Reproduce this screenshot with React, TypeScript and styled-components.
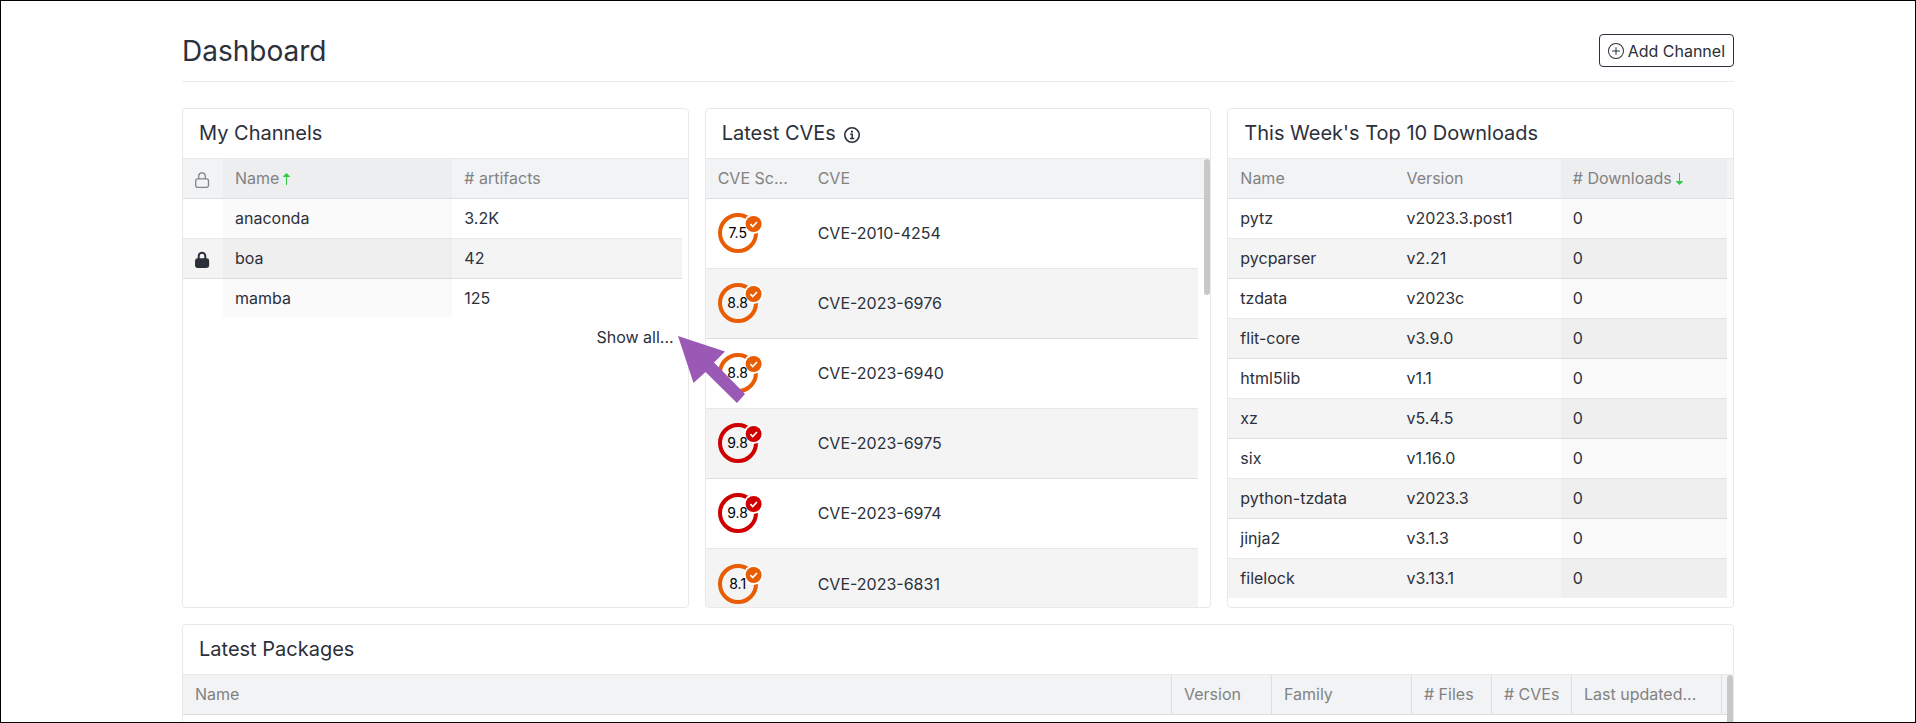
import React from 'react';
import styled, { createGlobalStyle, css } from 'styled-components';
import { BsPlusCircle } from 'react-icons/bs';

const GlobalStyle = createGlobalStyle`
  *, *::before, *::after { box-sizing: border-box; }
  body {
    margin: 0;
    background: #fff;
    color: #2b303b;
    font-family: Inter, "Liberation Sans", sans-serif;
    font-size: 16px;
    line-height: 24px;
  }
`;

const Page = styled.div`
  height: 100vh;
  overflow: hidden;
  border: 1px solid #000;
`;

const Container = styled.main`
  position: relative;
  max-width: 1584px;
  margin: 0 auto;
  padding: 24px 16px;
`;

const PageHeader = styled.header`
  display: flex;
  align-items: center;
  justify-content: space-between;
  height: 57px;
  padding-bottom: 5px;
  border-bottom: 1px solid #e9e9e9;
`;

const PageTitle = styled.h1`
  margin: 0;
  font-size: 28px;
  font-weight: 400;
  line-height: 32px;
`;

const OutlineButton = styled.button`
  display: flex;
  align-items: center;
  gap: 4px;
  height: 33px;
  padding: 0 8px;
  border: 1px solid #2b303b;
  border-radius: 4px;
  background: #fff;
  color: inherit;
  font: inherit;
`;

const CardGrid = styled.div`
  display: grid;
  grid-template-columns: repeat(3, minmax(0, 1fr));
  gap: 16px;
  margin-top: 26px;
`;

const Card = styled.section<{ $wide?: boolean }>`
  display: flex;
  flex-direction: column;
  height: 500px;
  overflow: hidden;
  border: 1px solid #e9e9e9;
  border-radius: 4px;
  ${({ $wide }) => $wide && css`grid-column: 1 / -1;`}
`;

const CardTitle = styled.h2`
  display: flex;
  flex: none;
  align-items: center;
  gap: 8px;
  height: 50px;
  margin: 0;
  padding: 0 16px 1px;
  border-bottom: 1px solid #e9e9e9;
  font-size: 20px;
  font-weight: 400;
`;

const CardBody = styled.div<{ $grow?: boolean }>`
  display: flex;
  flex: ${({ $grow }) => ($grow ? '1' : 'none')};
  align-items: flex-start;
  min-height: 0;
  overflow: hidden;
`;

const Scrollbar = styled.div<{ $length: number }>`
  flex: none;
  width: 6px;
  height: ${({ $length }) => $length}px;
  border-radius: 3px;
  background: #c8c8c8;
`;

const Table = styled.table`
  flex: 1;
  width: 100%;
  min-width: 0;
  table-layout: fixed;
  border-collapse: separate;
  border-spacing: 0;
`;

const Col = styled.col<{ $width?: number }>`
  width: ${({ $width }) => ($width ? `${$width}px` : 'auto')};
`;

const HeadCell = styled.th<{ $sorted?: boolean; $divided?: boolean }>`
  height: 40px;
  padding: 0 0 1px 12px;
  border-bottom: 1px solid #dddee0;
  background: ${({ $sorted }) => ($sorted ? '#edeef0' : '#f2f3f5')};
  color: #828282;
  font-weight: 400;
  text-align: left;
  white-space: nowrap;
  ${({ $divided }) => $divided && css`border-right: 1px solid #dddee0;`}
`;

const Gutter = styled.td`
  padding: 0;
  border-bottom: 1px solid #dddee0;
  background: #f2f3f5;
`;

const Cell = styled.td<{ $sorted?: boolean }>`
  padding: 0 0 1px 12px;
  border-bottom: 1px solid rgba(0, 0, 0, 0.09);
  background: ${({ $sorted }) => ($sorted ? '#fafafa' : '#fff')};
`;

const Row = styled.tr<{ $tall?: boolean }>`
  height: ${({ $tall }) => ($tall ? 70 : 40)}px;
  &:nth-child(even) ${Cell} { background: #f4f4f4; }
  &:nth-child(even) ${Cell}[data-sorted] { background: #efefef; }
  &:last-child { height: ${({ $tall }) => ($tall ? 70 : 39)}px; }
  &:last-child ${Cell} { border-bottom: 0; }
`;

const Svg = styled.svg`
  display: block;
  flex: none;
`;

const SortMark = styled(Svg)`
  display: inline-block;
  margin-left: 4px;
  vertical-align: -1px;
`;

const CardFooter = styled.div`
  display: flex;
  justify-content: flex-end;
  padding: 7px 14px;
`;

const CardLink = styled.a`
  color: inherit;
  text-decoration: none;
`;

const Score = styled.div`
  position: relative;
  width: 44px;
  height: 40px;
`;

const ScoreValue = styled.span`
  position: absolute;
  inset: 0 4px 0 0;
  color: #000;
  font-size: 14px;
  line-height: 40px;
  text-align: center;
`;

const Pointer = styled(Svg)`
  position: absolute;
  top: 335px;
  left: 512px;
`;

function SortArrow({ down }: { down?: boolean }) {
  return (
    <SortMark width="7" height="12" viewBox="0 0 7 12" aria-hidden="true">
      <g transform={down ? 'rotate(180 3.5 6)' : undefined} fill="#2ecc40">
        <path d="M3.500 0 6.800 3.200V4H.2V3.200z" />
        <rect x="3" y="3" width="1" height="9" />
      </g>
    </SortMark>
  );
}

function Lock({ filled }: { filled?: boolean }) {
  const color = filled ? '#2b303b' : '#828282';
  return (
    <Svg width="15" height="20" viewBox="0 -4 15 20" aria-label="Private" role="img">
      <path
        d="M3.700 7V4.200a3.300 3.400 0 0 1 6.600 0V7"
        fill="none"
        stroke={color}
        strokeWidth={filled ? 2 : 1.3}
      />
      <rect x=".7" y="6.900" width="12.800" height="8.400" rx="1.800" fill={filled ? color : 'none'} stroke={color} strokeWidth="1.300" />
    </Svg>
  );
}

function InfoIcon() {
  return (
    <Svg width="16" height="20" viewBox="0 -4 16 20" fill="none" stroke="currentColor" aria-label="About this list" role="img">
      <circle cx="8" cy="8" r="7.200" strokeWidth="1.600" />
      <path d="M6.200 7.200h2v4M6 11.500h4.200" strokeWidth="1.500" />
      <circle cx="7.900" cy="4.700" r="1.100" fill="currentColor" stroke="none" />
    </Svg>
  );
}

function ScoreBadge({ value }: { value: string }) {
  const color = Number(value) >= 9 ? '#d00000' : '#e85d04';
  return (
    <Score>
      <Svg width="46" height="40" viewBox="0 0 46 40" aria-hidden="true">
        <circle cx="20" cy="20" r="18" fill="none" stroke={color} strokeWidth="4" />
        <circle cx="35.600" cy="11" r="10" fill="#fff" />
        <circle cx="35.600" cy="11" r="8" fill={color} />
        <path d="m32.400 11.200 2.300 2.300 4.300-4.500" fill="none" stroke="#fff" strokeWidth="1.700" />
      </Svg>
      <ScoreValue>{value}</ScoreValue>
    </Score>
  );
}

const channels = [
  { name: 'anaconda', artifacts: '3.2K', locked: false },
  { name: 'boa', artifacts: '42', locked: true },
  { name: 'mamba', artifacts: '125', locked: false },
];

const cves = [
  ['7.5', 'CVE-2010-4254'],
  ['8.8', 'CVE-2023-6976'],
  ['8.8', 'CVE-2023-6940'],
  ['9.8', 'CVE-2023-6975'],
  ['9.8', 'CVE-2023-6974'],
  ['8.1', 'CVE-2023-6831'],
];

const downloads = [
  ['pytz', 'v2023.3.post1'],
  ['pycparser', 'v2.21'],
  ['tzdata', 'v2023c'],
  ['flit-core', 'v3.9.0'],
  ['html5lib', 'v1.1'],
  ['xz', 'v5.4.5'],
  ['six', 'v1.16.0'],
  ['python-tzdata', 'v2023.3'],
  ['jinja2', 'v3.1.3'],
  ['filelock', 'v3.13.1'],
];

const packageColumns: { label: string; width?: number }[] = [
  { label: 'Name' },
  { label: 'Version', width: 100 },
  { label: 'Family', width: 140 },
  { label: '# Files', width: 80 },
  { label: '# CVEs', width: 80 },
  { label: 'Last updated...', width: 150 },
];

export default function App() {
  return (
    <Page>
      <GlobalStyle />
      <Container>
        <PageHeader>
          <PageTitle>Dashboard</PageTitle>
          <OutlineButton type="button">
            <BsPlusCircle size={16} />
            Add Channel
          </OutlineButton>
        </PageHeader>

        <CardGrid>
          <Card>
            <CardTitle>My Channels</CardTitle>
            <CardBody>
              <Table>
                <colgroup>
                  <Col $width={40} />
                  <Col />
                  <Col />
                  <Col $width={6} />
                </colgroup>
                <thead>
                  <tr>
                    <HeadCell><Lock /></HeadCell>
                    <HeadCell $sorted>Name<SortArrow /></HeadCell>
                    <HeadCell># artifacts</HeadCell>
                    <Gutter />
                  </tr>
                </thead>
                <tbody>
                  {channels.map((c) => (
                    <Row key={c.name}>
                      <Cell>{c.locked && <Lock filled />}</Cell>
                      <Cell $sorted data-sorted>{c.name}</Cell>
                      <Cell>{c.artifacts}</Cell>
                    </Row>
                  ))}
                </tbody>
              </Table>
            </CardBody>
            <CardFooter>
              <CardLink href="#channels">Show all...</CardLink>
            </CardFooter>
          </Card>

          <Card>
            <CardTitle>
              Latest CVEs
              <InfoIcon />
            </CardTitle>
            <CardBody $grow>
              <Table>
                <colgroup>
                  <Col $width={100} />
                  <Col />
                  <Col $width={6} />
                </colgroup>
                <thead>
                  <tr>
                    <HeadCell>CVE Sc...</HeadCell>
                    <HeadCell>CVE</HeadCell>
                    <Gutter />
                  </tr>
                </thead>
                <tbody>
                  {cves.map(([score, id]) => (
                    <Row key={id} $tall>
                      <Cell><ScoreBadge value={score} /></Cell>
                      <Cell>{id}</Cell>
                    </Row>
                  ))}
                </tbody>
              </Table>
              <Scrollbar $length={136} />
            </CardBody>
          </Card>

          <Card>
            <CardTitle>This Week's Top 10 Downloads</CardTitle>
            <CardBody $grow>
              <Table>
                <colgroup>
                  <Col />
                  <Col />
                  <Col />
                  <Col $width={6} />
                </colgroup>
                <thead>
                  <tr>
                    <HeadCell>Name</HeadCell>
                    <HeadCell>Version</HeadCell>
                    <HeadCell $sorted># Downloads<SortArrow down /></HeadCell>
                    <Gutter />
                  </tr>
                </thead>
                <tbody>
                  {downloads.map(([name, version]) => (
                    <Row key={name}>
                      <Cell>{name}</Cell>
                      <Cell>{version}</Cell>
                      <Cell $sorted data-sorted>0</Cell>
                    </Row>
                  ))}
                </tbody>
              </Table>
            </CardBody>
          </Card>

          <Card $wide>
            <CardTitle>Latest Packages</CardTitle>
            <CardBody $grow>
              <Table>
                <colgroup>
                  {packageColumns.map((c) => <Col key={c.label} $width={c.width} />)}
                  <Col $width={5} />
                </colgroup>
                <thead>
                  <tr>
                    {packageColumns.map((c) => <HeadCell key={c.label} $divided>{c.label}</HeadCell>)}
                    <Gutter />
                  </tr>
                </thead>
              </Table>
              <Scrollbar $length={136} />
            </CardBody>
          </Card>
        </CardGrid>

        <Pointer width="68" height="68" viewBox="0 0 68 68" aria-hidden="true">
          <path d="M0 0 47 15.500 36 26.500 67 58 59 67 27.500 36 15.500 47z" fill="#9b59b6" />
        </Pointer>
      </Container>
    </Page>
  );
}
